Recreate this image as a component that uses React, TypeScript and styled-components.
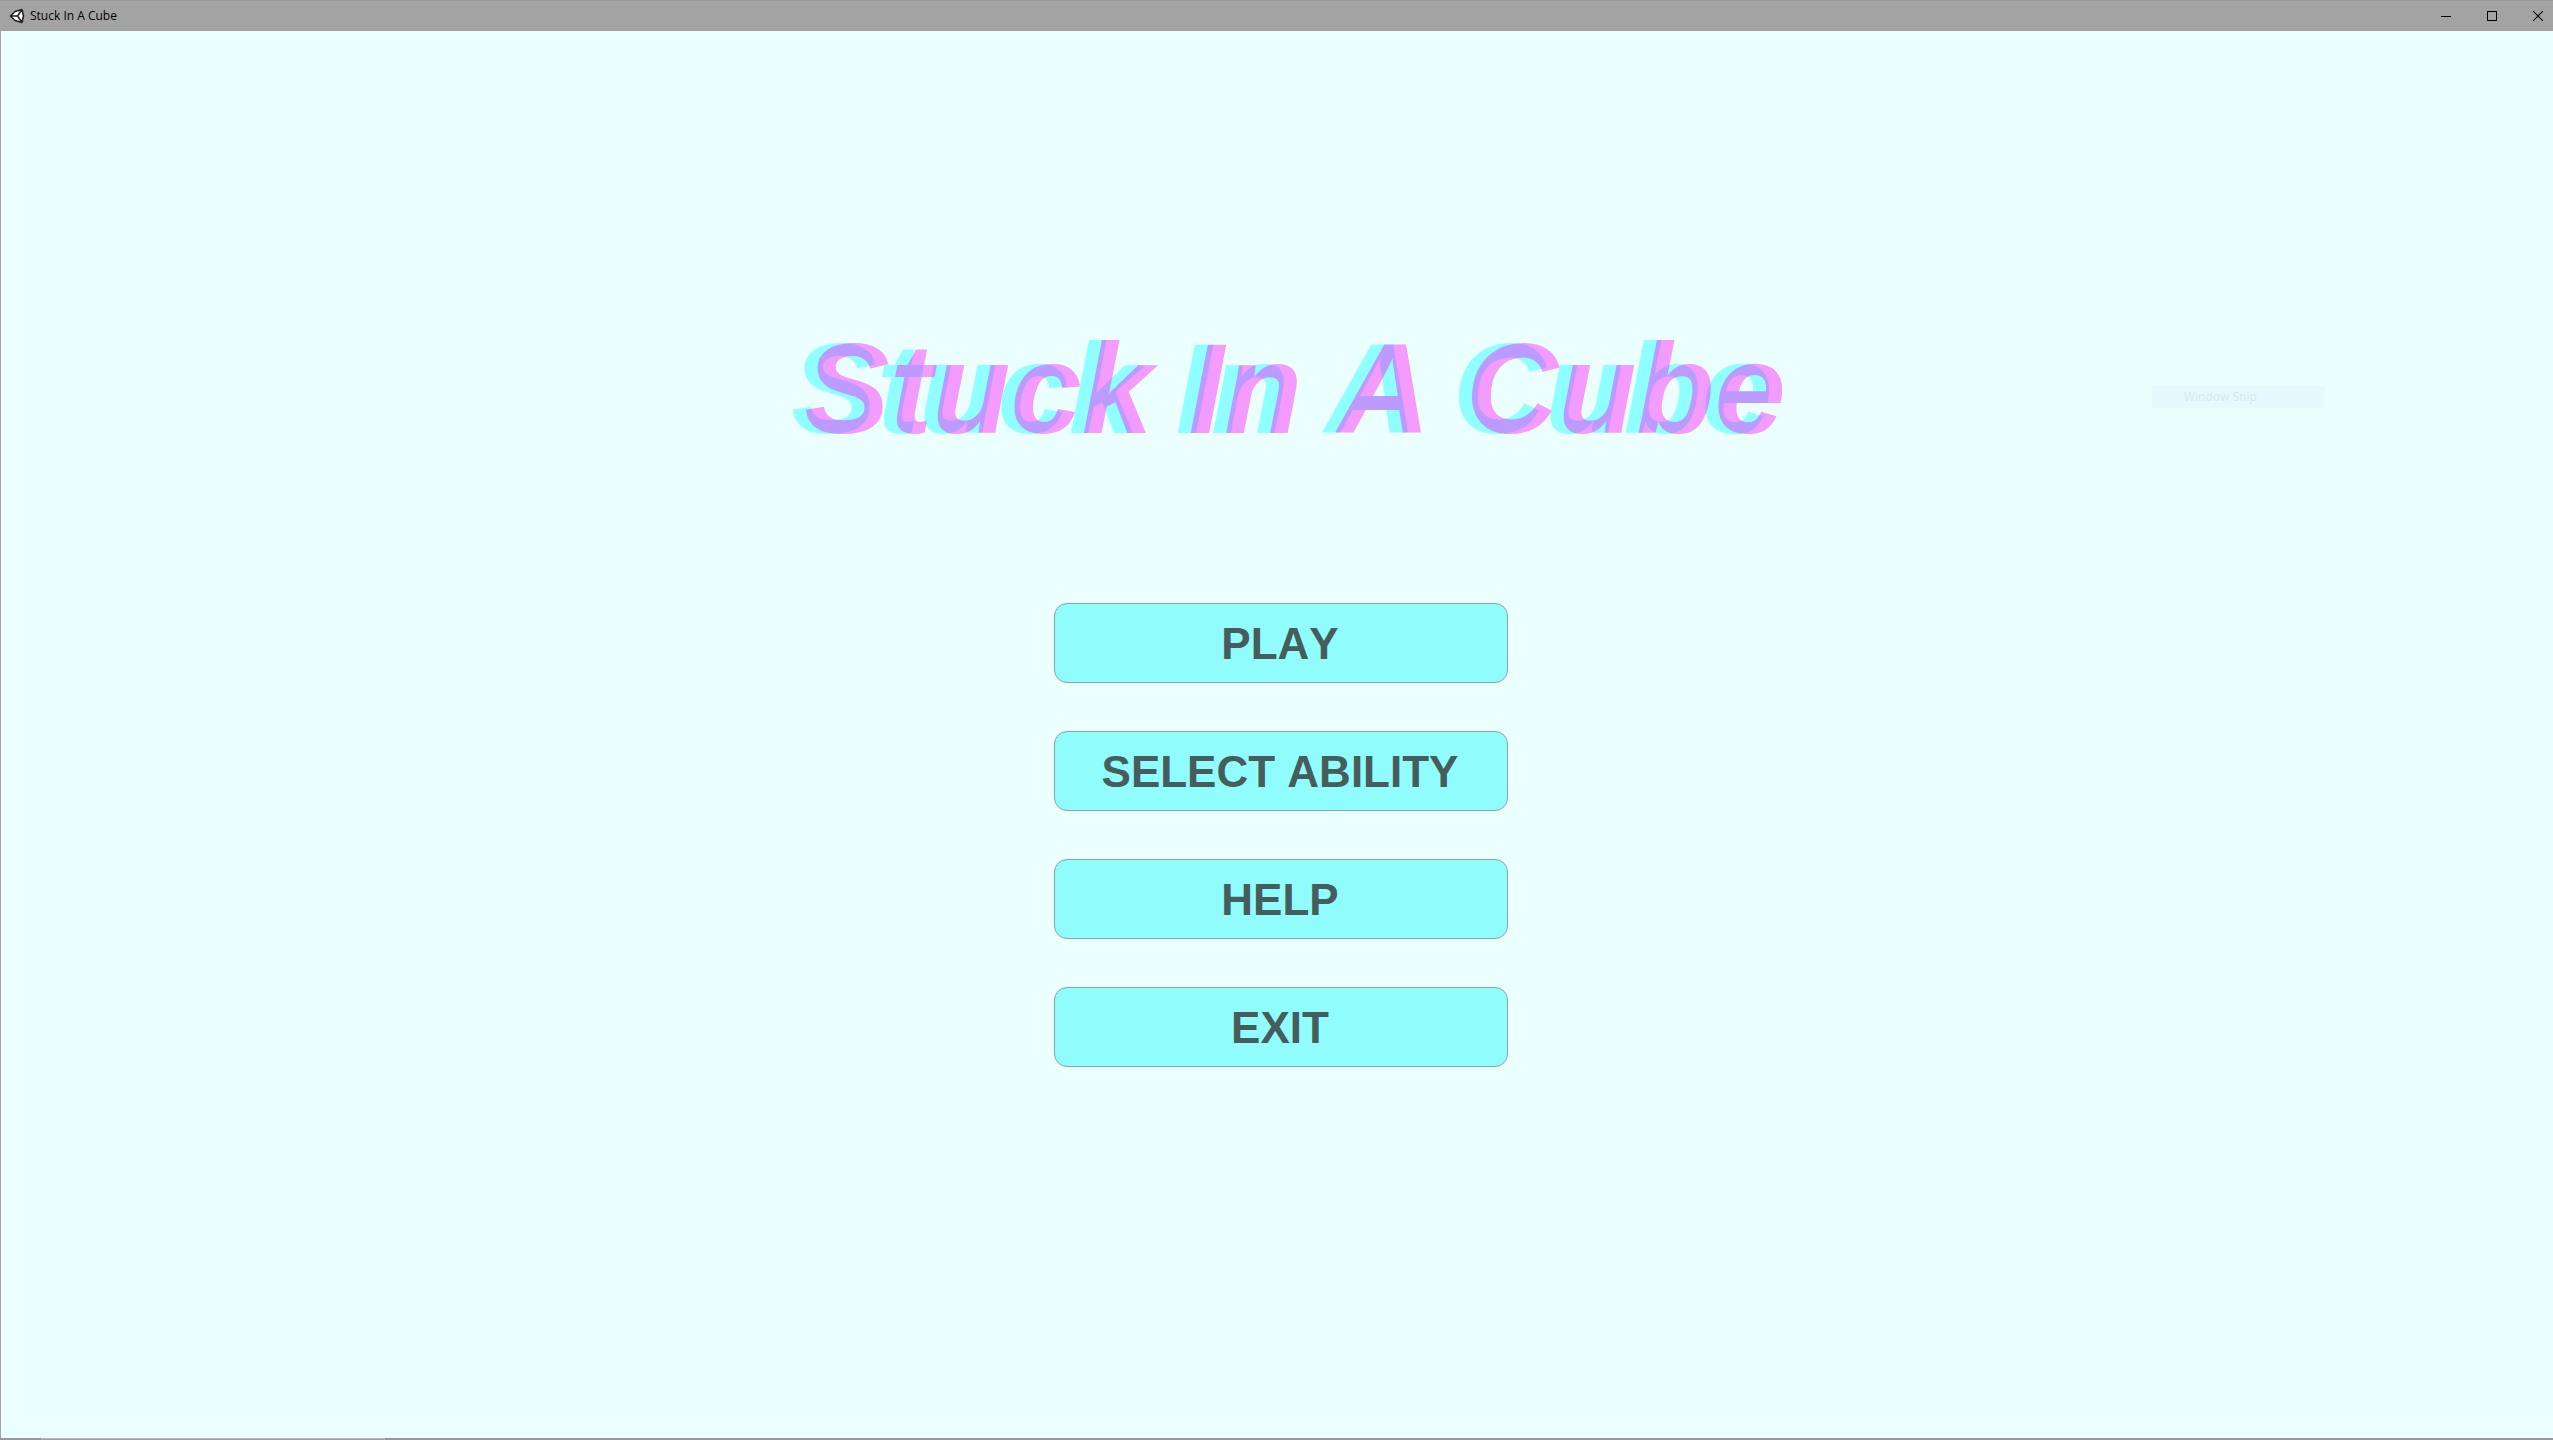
import React from "react";
import styled, { createGlobalStyle } from "styled-components";

const GlobalStyle = createGlobalStyle`
  *, *::before, *::after { box-sizing: border-box; }
  body { margin: 0; background: #ecffff; }
`;

const Window = styled.div`
  min-height: 100vh;
  display: flex;
  flex-direction: column;
  font-family: "Open Sans", "Noto Sans", sans-serif;
  background: #ecffff;
`;

const TitleBar = styled.header`
  display: flex;
  align-items: center;
  height: 31px;
  padding-left: 9px;
  background: #a3a3a3;
  border-top: 1px solid #9b9b9b;
`;

const AppIcon = styled.svg`
  width: 16px;
  height: 16px;
  margin-right: 5px;
`;

const Caption = styled.span`
  flex: 1;
  font-size: 12px;
  line-height: 16px;
  color: #000;
`;

const CaptionButton = styled.button`
  display: flex;
  align-items: center;
  justify-content: center;
  width: 46px;
  height: 30px;
  padding: 0;
  border: 0;
  background: transparent;

  &:last-child {
    width: 38px;
    padding-left: 8px;
  }
`;

const Stage = styled.main`
  position: relative;
  flex: 1;
  display: flex;
  flex-direction: column;
  align-items: center;
  padding: 285px 0 0 8px;
  border-left: 1px solid #a3a3a3;
`;

const GameTitle = styled.h1`
  margin: 0 0 141px;
  padding-left: 28px;
  font: italic bold 128px/146px "Liberation Sans", Arial, sans-serif;
  font-kerning: none;
  white-space: nowrap;
  color: rgba(255, 0, 255, 0.392);
  text-shadow: -13px 0 0 rgba(0, 255, 255, 0.392);
`;

const Menu = styled.nav`
  display: flex;
  flex-direction: column;
  gap: 48px;
  width: 454px;
`;

const MenuButton = styled.button`
  height: 80px;
  padding: 2px 2px 0 0;
  border: 1px solid #83a9a9;
  border-radius: 13px;
  background: #90fdfc;
  font: bold 44px/50px "Liberation Sans", Arial, sans-serif;
  font-kerning: none;
  color: #465d5d;
`;

const SnipGhost = styled.div`
  position: absolute;
  top: 355px;
  right: 228px;
  width: 173px;
  height: 22px;
  padding-left: 32px;
  background: #e5faff;
  font-size: 12px;
  line-height: 22px;
  color: #d6e9e9;
`;

const Taskbar = styled.footer`
  display: flex;
  height: 2px;
  background: #949a9b;
`;

const TaskbarSearch = styled.div`
  width: 344px;
  margin-left: 41px;
  border: 1px solid #b4b4b4;
  border-bottom: 0;
  background: #a19f9f;
`;

const items = ["PLAY", "SELECT ABILITY", "HELP", "EXIT"];

export default function App() {
  return (
    <Window>
      <GlobalStyle />
      <TitleBar>
        <AppIcon viewBox="0 0 16 16" aria-hidden="true">
          <path d="M1 8 5 3.5 13.5 1 15 8 13.5 15 5 12.5Z" fill="#fff" />
          <path
            d="M1.500 8 6 3.500 13 1.500 14.500 8 13 14.500 6 12.500ZM1.500 8H8.500M8.500 8 13 1.500M8.500 8 13 14.500"
            fill="none"
            stroke="#222"
            strokeWidth="1.6"
            strokeLinejoin="round"
          />
        </AppIcon>
        <Caption>Stuck In A Cube</Caption>
        <CaptionButton aria-label="Minimize">
          <svg width="10" height="10" shapeRendering="crispEdges"><path d="M0 5h10v1H0z" /></svg>
        </CaptionButton>
        <CaptionButton aria-label="Maximize">
          <svg width="10" height="10" shapeRendering="crispEdges"><path d="M0 0h10v10H0zM1 1v8h8V1z" fillRule="evenodd" /></svg>
        </CaptionButton>
        <CaptionButton aria-label="Close">
          <svg width="10" height="10"><path d="M0 0 10 10M10 0 0 10" stroke="#000" strokeWidth="1.1" /></svg>
        </CaptionButton>
      </TitleBar>
      <Stage>
        <GameTitle>Stuck In A Cube</GameTitle>
        <Menu>
          {items.map((label) => (
            <MenuButton key={label}>{label}</MenuButton>
          ))}
        </Menu>
        <SnipGhost>Window Snip</SnipGhost>
      </Stage>
      <Taskbar>
        <TaskbarSearch />
      </Taskbar>
    </Window>
  );
}
